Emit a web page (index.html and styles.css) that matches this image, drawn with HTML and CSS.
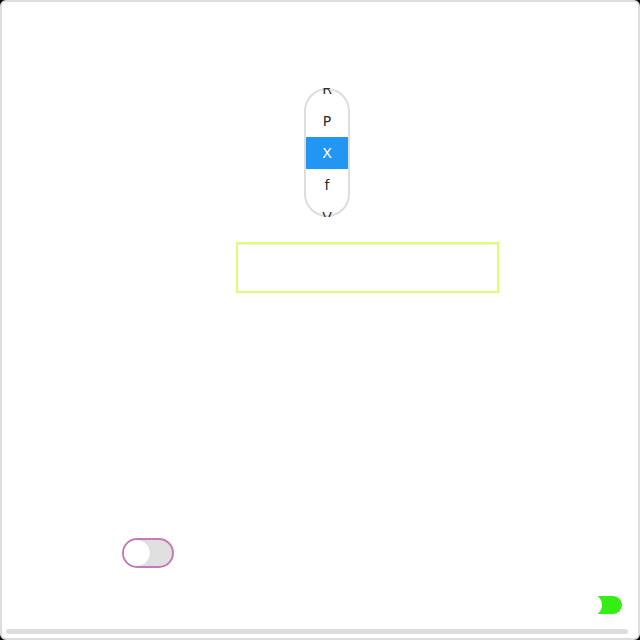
FILE: index.html
```html
<!DOCTYPE html>
<html>
<head>
<meta charset="utf-8">
<link rel="stylesheet" href="styles.css">
</head>
<body>
<div class="frame">
  <div class="picker">
    <div class="picker-view">
      <div class="picker-list">
        <div class="picker-item">R</div>
        <div class="picker-item">P</div>
        <div class="picker-item selected">X</div>
        <div class="picker-item">f</div>
        <div class="picker-item">V</div>
      </div>
    </div>
  </div>
  <div class="field"></div>
  <div class="toggle">
    <span class="toggle-knob"></span>
  </div>
  <div class="switch">
    <span class="switch-knob"></span>
  </div>
  <div class="hbar"></div>
</div>
</body>
</html>
```
FILE: styles.css
```css
html {
  background: #000;
}
body {
  margin: 0;
  font-family: "DejaVu Sans", sans-serif;
}
.frame {
  box-sizing: border-box;
  width: 640px;
  height: 640px;
  background: #fff;
  border: 2px solid #dddddd;
  border-radius: 6px;
  display: flex;
  flex-direction: column;
  align-items: flex-start;
  overflow: hidden;
}
.picker {
  box-sizing: border-box;
  margin-top: 86px;
  margin-left: 302px;
  width: 46px;
  height: 129px;
  border: 2px solid #dddddd;
  border-radius: 23px;
  background: #fff;
}
.picker-view {
  margin: -2px;
  height: calc(100% + 4px);
  overflow: hidden;
}
.picker-list {
  margin-top: -15px;
  display: flex;
  flex-direction: column;
}
.picker-item {
  height: 32px;
  margin: 0 2px;
  display: flex;
  align-items: center;
  justify-content: center;
  font-size: 14px;
  color: #2a2a2a;
}
.picker-item.selected {
  background: #2196f3;
  color: #fff;
}
.field {
  box-sizing: border-box;
  margin-top: 25px;
  margin-left: 234px;
  width: 263px;
  height: 51px;
  border: 2px solid #dcff6e;
  box-shadow: inset 0 1px 0 #ececec;
}
.toggle {
  box-sizing: border-box;
  margin-top: 245px;
  margin-left: 120px;
  width: 52px;
  height: 30px;
  border: 2px solid #c47ab9;
  border-radius: 15px;
  background: #e0e0e0;
  display: flex;
  align-items: center;
}
.toggle-knob {
  width: 26px;
  height: 26px;
  border-radius: 50%;
  background: #fff;
  box-shadow: 0 0 1px rgba(0,0,0,0.15);
}
.switch {
  position: relative;
  margin-top: 28px;
  align-self: flex-end;
  margin-right: 16px;
  width: 36px;
  height: 18px;
  border-radius: 9px;
  background: #35ee16;
}
.switch-knob {
  position: absolute;
  left: -6px;
  top: -2px;
  width: 22px;
  height: 22px;
  border-radius: 50%;
  background: #fff;
}
.hbar {
  margin-top: 15px;
  margin-left: 4px;
  width: 622px;
  height: 5px;
  border-radius: 3px;
  background: #dddddd;
}
```
